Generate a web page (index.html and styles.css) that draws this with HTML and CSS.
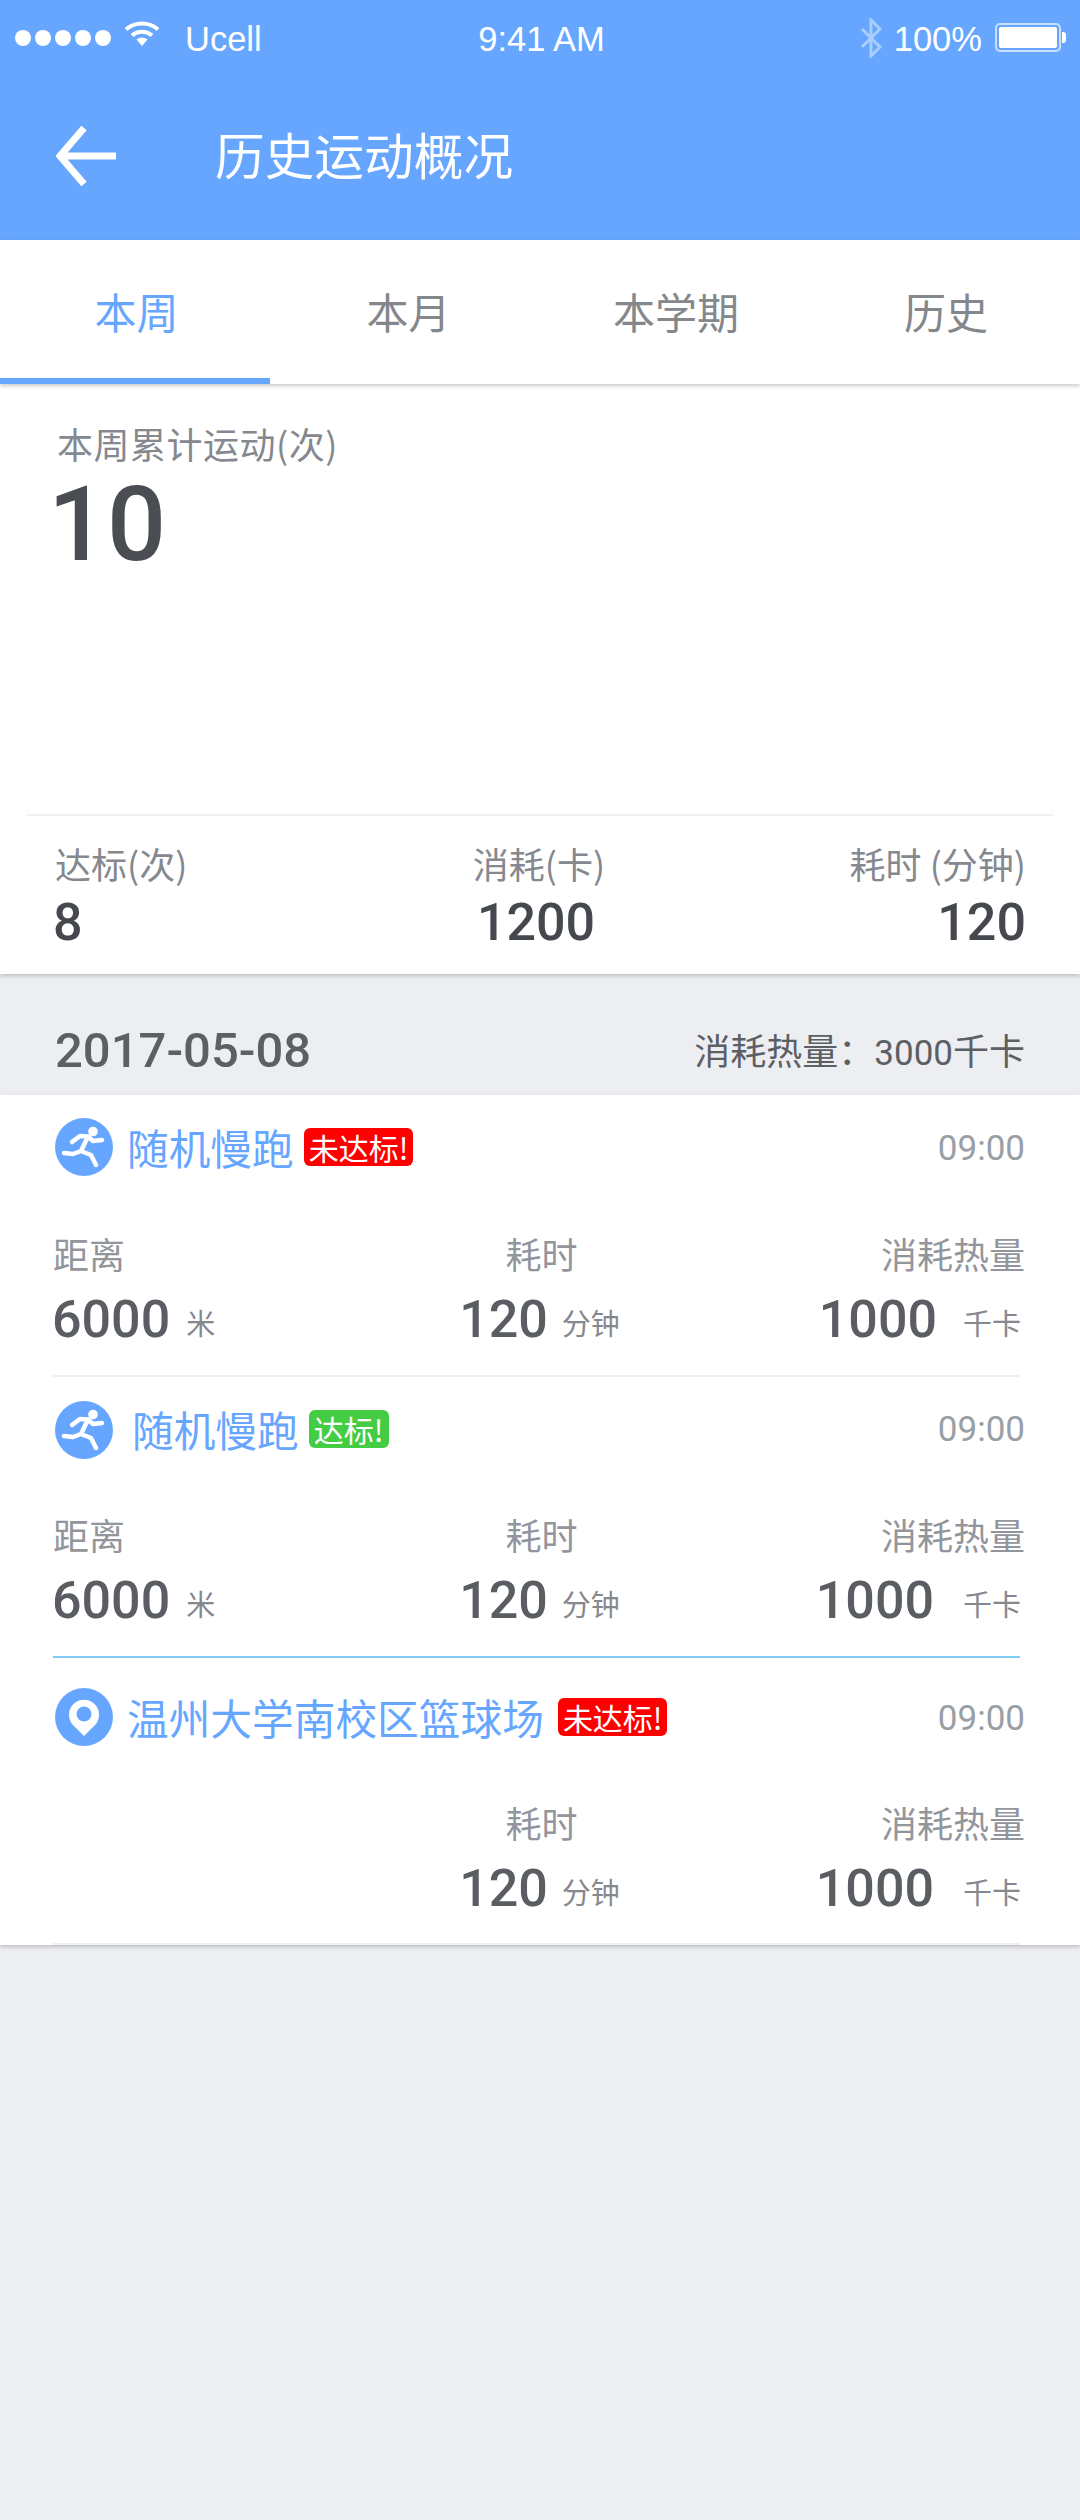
FILE: index.html
```html
<!DOCTYPE html>
<html lang="zh-CN">
<head>
<meta charset="utf-8">
<title>历史运动概况</title>
<link rel="stylesheet" href="styles.css">
</head>
<body>
<header class="header">
  <div class="status">
    <div class="status-left">
      <span class="dots"><i></i><i></i><i></i><i></i><i></i></span>
      <svg class="wifi" viewBox="0 0 36 26"><path d="M2 9.500C11 1.500 25 1.500 34 9.500" /><path d="M8 15.500C14 10.500 22 10.500 28 15.500" /><path class="wifi-tip" d="M12.500 19.500C15.500 16.800 20.500 16.800 23.500 19.500L18 26Z" /></svg>
      <span class="carrier">Ucell</span>
    </div>
    <div class="clock">9:41 AM</div>
    <div class="status-right">
      <svg class="bt" viewBox="0 0 22 40"><path d="M2 11L20 29L11 38V2L20 11L2 29" /></svg>
      <span class="pct">100%</span>
      <span class="battery"><span class="battery-fill"></span></span>
    </div>
  </div>
  <div class="toolbar">
    <svg class="back" viewBox="0 0 60 60"><path d="M28 2L4 30L28 58M4 30H60" /></svg>
    <h1 class="title">历史运动概况</h1>
  </div>
</header>

<nav class="tabs">
  <a class="tab active">本周</a>
  <a class="tab tab-month">本月</a>
  <a class="tab">本学期</a>
  <a class="tab">历史</a>
</nav>

<section class="summary">
  <div class="summary-top">
    <div class="summary-label">本周累计运动(次)</div>
    <div class="summary-num">10</div>
  </div>
  <div class="stats">
    <div class="stat"><div class="stat-label">达标(次)</div><div class="stat-num">8</div></div>
    <div class="stat mid"><div class="stat-label">消耗(卡)</div><div class="stat-num">1200</div></div>
    <div class="stat end"><div class="stat-label">耗时 (分钟)</div><div class="stat-num">120</div></div>
  </div>
</section>

<div class="day">
  <span class="day-date">2017-05-08</span>
  <span class="day-total">消耗热量：<span class="day-num">3000</span>千卡</span>
</div>

<section class="list">
  <article class="item item-1">
    <div class="item-head">
      <svg class="ico" viewBox="0 0 58 58"><circle class="ico-bg" cx="29" cy="29" r="29"/><circle class="ico-fg" cx="38" cy="13.500" r="4.800"/><path class="run" d="M17 24L25 18L33 18.500L26 33L18 36L9 35M33 18.500L38 23L47 22M26 33L36 37L41 47"/></svg>
      <span class="item-name">随机慢跑</span>
      <span class="badge bad">未达标!</span>
      <span class="item-time">09:00</span>
    </div>
    <div class="metrics">
      <div class="metric"><div class="metric-label">距离</div><div class="metric-val"><b>6000</b><span class="unit mi">米</span></div></div>
      <div class="metric mid"><div class="metric-label">耗时</div><div class="metric-val"><b>120</b><span class="unit">分钟</span></div></div>
      <div class="metric end"><div class="metric-label">消耗热量</div><div class="metric-val"><b>1000</b><span class="unit wide">千卡</span></div></div>
    </div>
  </article>
  <article class="item item-2">
    <div class="item-head">
      <svg class="ico" viewBox="0 0 58 58"><circle class="ico-bg" cx="29" cy="29" r="29"/><circle class="ico-fg" cx="38" cy="13.500" r="4.800"/><path class="run" d="M17 24L25 18L33 18.500L26 33L18 36L9 35M33 18.500L38 23L47 22M26 33L36 37L41 47"/></svg>
      <span class="item-name shift">随机慢跑</span>
      <span class="badge good">达标!</span>
      <span class="item-time">09:00</span>
    </div>
    <div class="metrics">
      <div class="metric"><div class="metric-label">距离</div><div class="metric-val"><b>6000</b><span class="unit mi">米</span></div></div>
      <div class="metric mid"><div class="metric-label">耗时</div><div class="metric-val"><b>120</b><span class="unit">分钟</span></div></div>
      <div class="metric end"><div class="metric-label">消耗热量</div><div class="metric-val"><b>1000</b><span class="unit wider">千卡</span></div></div>
    </div>
  </article>
  <article class="item item-3">
    <div class="item-head">
      <svg class="ico" viewBox="0 0 58 58"><circle class="ico-bg" cx="29" cy="29" r="29"/><path class="ico-fg" d="M29 48L18 37A15 15 0 1 1 40 37Z"/><circle class="ico-bg" cx="29" cy="26" r="7.500"/></svg>
      <span class="item-name">温州大学南校区篮球场</span>
      <span class="badge bad far">未达标!</span>
      <span class="item-time">09:00</span>
    </div>
    <div class="metrics">
      <div class="metric"></div>
      <div class="metric mid"><div class="metric-label">耗时</div><div class="metric-val"><b>120</b><span class="unit">分钟</span></div></div>
      <div class="metric end"><div class="metric-label">消耗热量</div><div class="metric-val"><b>1000</b><span class="unit wider">千卡</span></div></div>
    </div>
  </article>
</section>
</body>
</html>
```
FILE: styles.css
```css
* { box-sizing: border-box; }
html, body { margin: 0; padding: 0; }
body {
  width: 1080px;
  height: 2520px;
  background: #edeef2;
  font-family: "Noto Sans CJK SC", "Liberation Sans", sans-serif;
  overflow: hidden;
}

/* header */
.header { height: 240px; background: #66a6ff; color: #fff; }
.status {
  height: 76px;
  padding: 2px 19px 0 15px;
  display: grid;
  grid-template-columns: 1fr auto 1fr;
  align-items: center;
  font-family: "Liberation Sans", sans-serif;
  font-size: 34.500px;
}
.status-left, .status-right { display: flex; align-items: center; }
.status-right { justify-content: flex-end; }
.dots { display: flex; gap: 4px; margin-top: -2px; }
.dots i { width: 16px; height: 16px; border-radius: 50%; background: #fff; display: block; }
.wifi { width: 36px; height: 26px; margin-left: 13px; margin-top: -13px; fill: none; stroke: #fff; stroke-width: 4; }
.wifi-tip { fill: #fff; stroke: none; }
.carrier { margin-left: 25px; }
.clock { margin-left: 7px; }
.bt { width: 22px; height: 40px; fill: none; stroke: #fff; stroke-opacity: .45; stroke-width: 3; margin-top: -3px; }
.pct { margin-left: 12px; }
.battery {
  width: 66px;
  height: 29px;
  margin-left: 13px;
  margin-top: -3px;
  border: 2px solid #c9dfff;
  border-radius: 5px;
  padding: 2px;
  display: block;
  position: relative;
}
.battery::after {
  content: "";
  position: absolute;
  right: -7px;
  top: 7px;
  width: 4px;
  height: 11px;
  background: #fff;
  border-radius: 0 3px 3px 0;
}
.battery-fill { display: block; height: 100%; background: #fff; border-radius: 2px; }
.toolbar { height: 164px; display: flex; align-items: center; padding: 0 0 0 56px; }
.back { width: 60px; height: 60px; margin-top: -4px; fill: none; stroke: #fff; stroke-width: 7; }
.title { margin: -10px 0 0 99px; font-size: 49.700px; font-weight: 400; line-height: 70px; }

/* tabs */
.tabs {
  height: 144px;
  background: #fff;
  display: grid;
  grid-template-columns: repeat(4, 270px);
  box-shadow: 0 2px 4px rgba(0, 0, 0, .22);
  position: relative;
  z-index: 2;
}
.tab {
  font-size: 42px;
  color: #84878c;
  text-align: center;
  line-height: 142px;
  height: 144px;
  padding-left: 2px;
}
.tab.tab-month { padding-left: 7px; }
.tab.active { color: #66a6ff; border-bottom: 6px solid #66a6ff; padding-left: 3px; }

/* summary */
.summary { background: #fff; box-shadow: 0 2px 4px rgba(0, 0, 0, .2); height: 590px; position: relative; z-index: 1; }
.summary-top { height: 430px; padding: 34px 0 0 57px; }
.summary-label { font-size: 36px; line-height: 50px; color: #85888e; letter-spacing: .5px; }
.summary-num {
  font-family: Roboto, sans-serif;
  font-weight: 500;
  font-size: 104px;
  line-height: 100px;
  color: #4a4d52;
  margin: 7px 0 0 -9px;
}
.stats {
  margin: 0 27px;
  padding: 22px 27px 0 28px;
  border-top: 2px solid #eff0f3;
  display: grid;
  grid-template-columns: 1fr 1fr 1fr;
}
.stat-label { font-size: 36px; line-height: 50px; color: #85888e; white-space: nowrap; }
.stat-num {
  font-family: Roboto, sans-serif;
  font-weight: 500;
  font-size: 52px;
  line-height: 60px;
  color: #45484d;
  margin-top: 5px;
  margin-left: -2px;
}
.stat.mid { text-align: center; padding-right: 3px; }
.stat.mid .stat-num { margin-left: -6px; }
.stat.end { text-align: right; }

/* day row */
.day {
  height: 121px;
  padding: 52px 55px 0 55px;
  display: flex;
  justify-content: space-between;
  align-items: flex-start;
  line-height: 50px;
}
.day-date { font-family: Roboto, sans-serif; font-weight: 500; font-size: 49px; color: #5c5f64; }
.day-total { font-size: 36px; color: #5c5f64; margin-top: -2px; }
.day-num { font-family: Roboto, sans-serif; font-size: 35px; }

/* list */
.list { background: #fff; box-shadow: 0 2px 4px rgba(0, 0, 0, .2); position: relative; }
.item { margin: 0 60px 0 53px; padding-bottom: 25px; }
.item-1 { padding-top: 23px; border-bottom: 2px solid #eff0f3; }
.item-2 { padding-top: 24px; border-bottom: 2px solid #7fcdf2; }
.item-3 { padding-top: 30px; padding-bottom: 24px; border-bottom: 2px solid #eff0f3; }
.item-head { display: flex; align-items: center; height: 58px; }
.ico { width: 58px; height: 58px; flex: none; margin-left: 2px; }
.ico-bg { fill: #66a6ff; }
.ico-fg { fill: #fff; }
.run { fill: none; stroke: #fff; stroke-width: 4.500; stroke-linecap: round; stroke-linejoin: round; }
.item-name { margin-left: 14px; font-size: 41.700px; color: #66a6ff; line-height: 58px; white-space: nowrap; }
.item-2 .item-name, .item-2 .item-time { margin-top: -3px; }
.item-name.shift { margin-left: 19px; }
.badge {
  margin-left: 10px;
  height: 38px;
  line-height: 38px;
  padding: 0 4.500px 0 5px;
  border-radius: 6px;
  color: #fff;
  font-size: 30px;
  white-space: nowrap;
}
.item-2 .badge { padding: 0 6px 0 5px; margin-top: -2px; }
.badge.far { margin-left: 14px; }
.bad { background: #ff0000; }
.good { background: #44cc44; }
.item-time {
  margin-left: auto;
  margin-right: -5px;
  font-family: Roboto, sans-serif;
  font-size: 35px;
  color: #9a9ea5;
  padding-top: 2px;
}
.metrics { display: grid; grid-template-columns: 1fr 1fr 1fr; margin-top: 52px; margin-right: -5px; }
.item-2 .metrics { margin-top: 50px; }
.item-3 .metrics { margin-top: 51px; }
.metric-label { font-size: 36px; line-height: 50px; color: #92959b; }
.metric.mid .metric-label { padding-left: 3px; }
.metric-val { margin-top: 12px; line-height: 60px; height: 60px; white-space: nowrap; }
.metric-val b {
  font-family: Roboto, sans-serif;
  font-weight: 500;
  font-size: 52px;
  color: #5a5d62;
  margin-left: -1px;
}
.unit { font-size: 29px; color: #85888e; margin-left: 14px; vertical-align: 2px; }
.unit.mi { margin-left: 16px; }
.unit.wide { margin-left: 26px; margin-right: 4px; }
.unit.wider { margin-left: 29px; margin-right: 4px; }
.metric.mid { text-align: center; padding-left: 2px; }
.metric.end { text-align: right; }
```
